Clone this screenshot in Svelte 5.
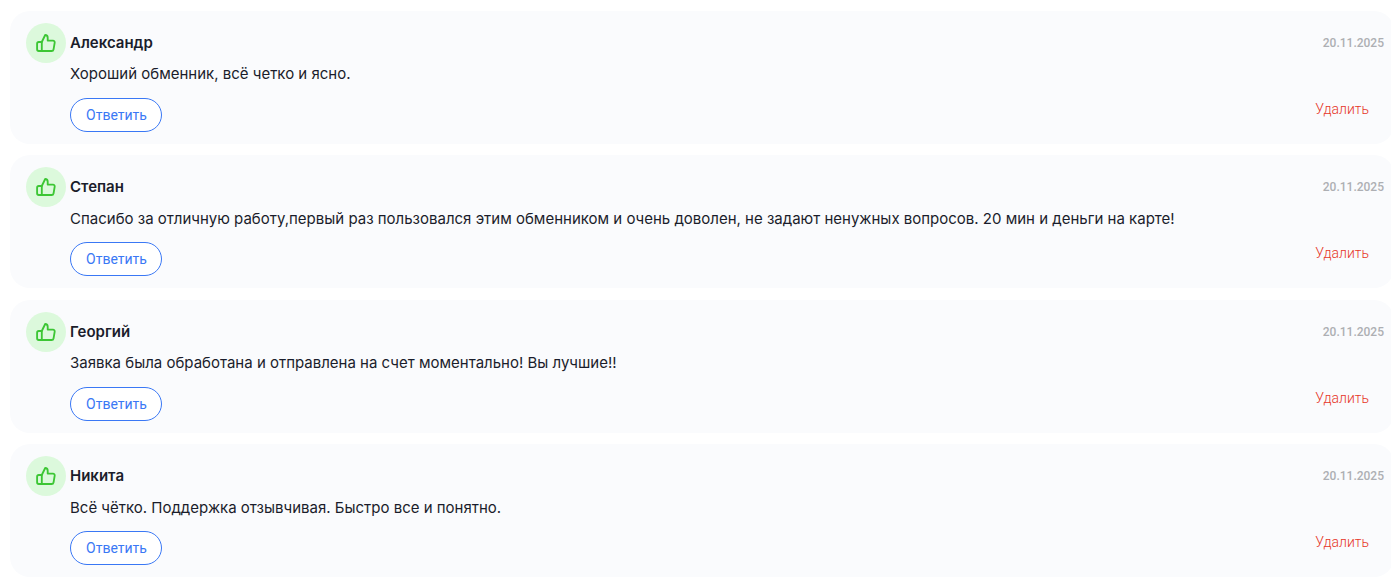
<script>
  const reviews = [
    { name: "Александр", text: "Хороший обменник, всё четко и ясно.", date: "20.11.2025" },
    {
      name: "Степан",
      text: "Спасибо за отличную работу,первый раз пользовался этим обменником и очень доволен, не задают ненужных вопросов. 20 мин и деньги на карте!",
      date: "20.11.2025",
    },
    { name: "Георгий", text: "Заявка была обработана и отправлена на счет моментально! Вы лучшие!!", date: "20.11.2025" },
    { name: "Никита", text: "Всё чётко. Поддержка отзывчивая. Быстро все и понятно.", date: "20.11.2025" },
  ];
</script>

<div class="list">
  {#each reviews as review}
    <div class="card">
      <div class="avatar">
        <svg width="20" height="20" viewBox="0 0 20 20" fill="none" stroke="#3cc634" stroke-width="1.85" stroke-linejoin="round" stroke-linecap="round">
          <path d="M5.8 9 L9.2 2 C10.7 2 11.7 3.2 11.7 4.8 V7.6 H17 C18.1 7.6 18.9 8.6 18.7 9.7 L17.6 16.2 C17.4 17.2 16.6 18 15.6 18 H5.8 Z" />
          <path d="M5.8 9 H2.8 C1.8 9 1.1 9.7 1.1 10.7 V16.3 C1.1 17.3 1.8 18 2.8 18 H5.8" />
        </svg>
      </div>
      <div class="body">
        <div class="head">
          <span class="name">{review.name}</span>
          <span class="date">{review.date}</span>
        </div>
        <p class="text">{review.text}</p>
        <div class="actions">
          <button class="reply">Ответить</button>
          <button class="delete">Удалить</button>
        </div>
      </div>
    </div>
  {/each}
</div>

<style>
  :global(body) {
    background: #fff;
    overflow: hidden;
  }
  .list {
    display: flex;
    flex-direction: column;
    gap: 11.4px;
    padding: 11px 0 0 10px;
    width: 1384px;
    font-family: Inter, sans-serif;
    color: #1a1d2b;
  }
  .card {
    display: flex;
    gap: 4px;
    height: 133px;
    box-sizing: border-box;
    padding: 12px 10px 0 16px;
    background: #fafbfd;
    border-radius: 20px;
  }
  .avatar {
    flex: none;
    width: 40px;
    height: 40px;
    display: flex;
    align-items: center;
    justify-content: center;
    background: #dcf9dc;
    border-radius: 50%;
  }
  .body {
    flex: 1;
    display: flex;
    flex-direction: column;
  }
  .head {
    display: flex;
    justify-content: space-between;
    align-items: center;
    height: 39px;
  }
  .name {
    font-size: 15px;
    font-weight: 600;
  }
  .date {
    margin-top: 1px;
    font-family: Roboto, sans-serif;
    font-size: 12px;
    font-weight: 500;
    color: #adafb3;
  }
  .text {
    margin: 2.4px 0 0;
    font-size: 15px;
    line-height: 20px;
  }
  .actions {
    display: flex;
    justify-content: space-between;
    align-items: flex-start;
    margin-top: 13.6px;
  }
  .reply {
    width: 92px;
    height: 34px;
    padding: 0 0 0 1px;
    background: #fff;
    border: 1px solid #3a78f5;
    border-radius: 17px;
    color: #3a78f5;
    font-family: Roboto, sans-serif;
    font-size: 14px;
    font-weight: 400;
    cursor: pointer;
  }
  .delete {
    margin: 3px 15px 0 0;
    padding: 0;
    background: none;
    border: none;
    color: #e63527;
    font-family: Roboto, sans-serif;
    font-size: 14px;
    font-weight: 300;
    cursor: pointer;
  }
</style>
